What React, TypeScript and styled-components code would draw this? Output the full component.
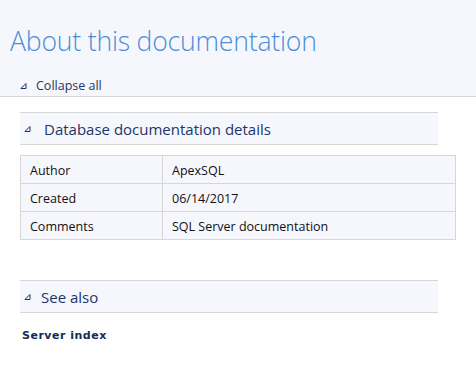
import React from 'react';
import styled, { createGlobalStyle } from 'styled-components';

const GlobalStyle = createGlobalStyle`
    body {
        margin: 0;
        background: #ffffff;
        font-family: "Open Sans", "Noto Sans", sans-serif;
    }
`

const Header = styled.div`
    height: 96px;
    background-color: #f6f7fd;
    border-bottom: 1px solid #d6d6d6;
    display: flex;
    flex-direction: column;
`

const Title = styled.h1`
    margin: 24px 0 0 10px;
    font-weight: 300;
    font-size: 26.6px;
    line-height: 34px;
    color: #4b8ed8;
    letter-spacing: -0.2px;
`

const CollapseAll = styled.div`
    display: flex;
    align-items: center;
    margin: 19px 0 0 20px;
    font-size: 12.5px;
    color: #1c3566;
    gap: 9px;
`

const Content = styled.div`
    padding: 15px 20px 0 20px;
`

const SectionHeader = styled.div<{ $gap: number }>`
    width: 414px;
    height: 31px;
    box-sizing: content-box;
    background-color: #f6f7fd;
    border-top: 1px solid #d6d6d6;
    border-bottom: 1px solid #d6d6d6;
    display: flex;
    align-items: center;
    padding-left: 4px;
    gap: ${({ $gap }) => $gap}px;
    font-size: 15px;
    color: #1c3566;
`

const Table = styled.table`
    margin-top: 10px;
    width: 436px;
    border-collapse: collapse;
    background-color: #f6f7fd;
    font-size: 12.5px;
    color: #111;
`

const Cell = styled.td<{ $width?: number }>`
    border: 1px solid #d6d6d6;
    height: 26px;
    padding: 1px 0 0 9px;
    ${({ $width }) => ($width ? `width: ${$width}px;` : '')}
`

const Spacer = styled.div`
    height: 40px;
`

const Link = styled.div`
    margin: 16px 0 0 2px;
    font-family: "DejaVu Sans", Verdana, sans-serif;
    font-weight: bold;
    font-size: 11px;
    letter-spacing: 0.5px;
    color: #122c54;
`

const Triangle = () => (
    <svg width="7" height="6" viewBox="0 0 7 6">
        <path d="M6 0.5 L6 5.5 L0.8 5.5 Z" fill="none" stroke="#1c3566" strokeWidth="1" />
    </svg>
)

const rows = [
    ['Author', 'ApexSQL'],
    ['Created', '06/14/2017'],
    ['Comments', 'SQL Server documentation'],
]

const App = () => {
    return (
        <>
            <GlobalStyle />
            <Header>
                <Title>About this documentation</Title>
                <CollapseAll>
                    <Triangle />
                    <span>Collapse all</span>
                </CollapseAll>
            </Header>
            <Content>
                <SectionHeader $gap={13}>
                    <Triangle />
                    <span>Database documentation details</span>
                </SectionHeader>
                <Table>
                    <tbody>
                        {rows.map(([k, v]) => (
                            <tr key={k}>
                                <Cell $width={132}>{k}</Cell>
                                <Cell>{v}</Cell>
                            </tr>
                        ))}
                    </tbody>
                </Table>
                <Spacer />
                <SectionHeader $gap={10}>
                    <Triangle />
                    <span>See also</span>
                </SectionHeader>
                <Link>Server index</Link>
            </Content>
        </>
    )
}

export default App;
